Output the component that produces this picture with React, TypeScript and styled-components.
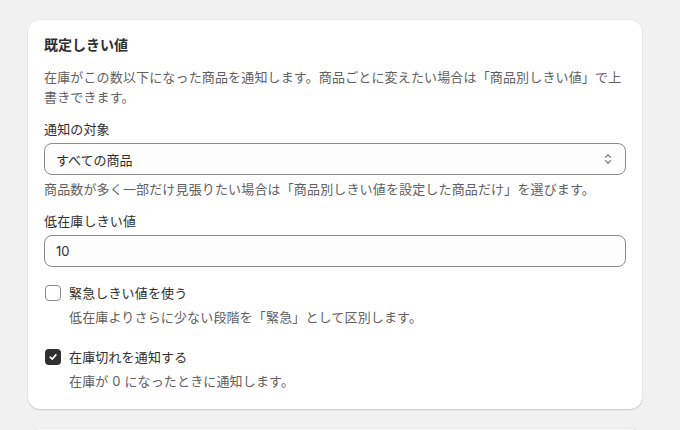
import React from 'react';
import styled, { createGlobalStyle } from 'styled-components';

const GlobalStyle = createGlobalStyle`
  html, body {
    margin: 0;
    padding: 0;
    background: #f1f1f1;
  }
  body {
    font-family: Inter, "Noto Sans CJK JP", sans-serif;
    color: #303030;
    -webkit-font-smoothing: antialiased;
  }
`;

const Page = styled.div`
  padding: 20px 38px 0 28px;
  display: flex;
  flex-direction: column;
  gap: 20px;
  height: 430px;
  box-sizing: border-box;
  overflow: hidden;
`;

const Card = styled.section`
  background: #fff;
  border-radius: 12px;
  box-shadow: 0 1px 0 0 rgba(26, 26, 26, 0.07), 0 0 0 1px rgba(0, 0, 0, 0.03), 0 1px 2px rgba(0, 0, 0, 0.08);
  padding: 15px 16px 18px;
  display: flex;
  flex-direction: column;
  flex-shrink: 0;
`;

const Title = styled.h2`
  margin: 0;
  font-size: 14px;
  line-height: 20px;
  font-weight: 650;
`;

const Text = styled.p<{ $tone?: 'subdued' }>`
  margin: 0;
  font-size: 13px;
  line-height: 20px;
  letter-spacing: 0.15px;
  color: ${(p) => (p.$tone === 'subdued' ? '#616161' : '#303030')};
`;

const Description = styled(Text)`
  margin-top: 12px;
`;

const Field = styled.div`
  margin-top: 12px;
  display: flex;
  flex-direction: column;
  gap: 4px;
`;

const Label = styled.label`
  font-size: 13px;
  line-height: 20px;
  letter-spacing: 0.15px;
  color: #303030;
`;

const InputBox = styled.div`
  position: relative;
  height: 32px;
  box-sizing: border-box;
  border: 1px solid #8a8a8a;
  border-radius: 8px;
  background: #fdfdfd;
  display: flex;
  align-items: center;
  padding: 0 11px;
  font-size: 13px;
  color: #303030;
`;

const Chevron = styled.svg`
  position: absolute;
  right: 13px;
  top: 50%;
  transform: translateY(-50%);
`;

const Options = styled.div`
  margin-top: 16px;
  display: flex;
  flex-direction: column;
  gap: 20px;
`;

const Option = styled.div`
  display: grid;
  grid-template-columns: 16px 1fr;
  column-gap: 9px;
  align-items: center;
`;

const Box = styled.span<{ $checked?: boolean }>`
  width: 16px;
  height: 16px;
  box-sizing: border-box;
  border-radius: 4px;
  border: ${(p) => (p.$checked ? 'none' : '1px solid #8a8a8a')};
  background: ${(p) => (p.$checked ? '#303030' : '#fff')};
  display: flex;
  align-items: center;
  justify-content: center;
  margin-left: 1px;
`;

const OptionLabel = styled.span`
  font-size: 13px;
  line-height: 20px;
  letter-spacing: 0.15px;
  color: #303030;
`;

const OptionHelp = styled(Text)`
  grid-column: 2;
  margin-top: 4px;
`;

const Checkbox: React.FC<{ checked?: boolean; label: string; help: string }> = ({ checked, label, help }) => (
  <Option>
    <Box $checked={checked}>
      {checked && (
        <svg width="10" height="10" viewBox="0 0 10 10">
          <path d="M2.2 5.2 L4.2 7.1 L7.9 2.9" fill="none" stroke="#fff" strokeWidth="1.6" strokeLinecap="round" strokeLinejoin="round" />
        </svg>
      )}
    </Box>
    <OptionLabel>{label}</OptionLabel>
    <OptionHelp $tone="subdued">{help}</OptionHelp>
  </Option>
);

const NextCard = styled.div`
  background: #fff;
  border-radius: 12px;
  height: 40px;
  flex-shrink: 0;
  box-shadow: 0 0 0 1px rgba(0, 0, 0, 0.05);
`;

const App: React.FC = () => {
  return (
    <>
      <GlobalStyle />
      <Page>
        <Card>
          <Title>既定しきい値</Title>
          <Description $tone="subdued">
            在庫がこの数以下になった商品を通知します。商品ごとに変えたい場合は「商品別しきい値」で上書きできます。
          </Description>
          <Field>
            <Label>通知の対象</Label>
            <InputBox>
              すべての商品
              <Chevron width="8" height="12" viewBox="0 0 8 12">
                <path d="M1.5 4.3 L4 1.8 L6.5 4.3 M1.5 7.7 L4 10.2 L6.5 7.7" fill="none" stroke="#6b6b6b" strokeWidth="1.1" strokeLinecap="round" strokeLinejoin="round" />
              </Chevron>
            </InputBox>
            <Text $tone="subdued">
              商品数が多く一部だけ見張りたい場合は「商品別しきい値を設定した商品だけ」を選びます。
            </Text>
          </Field>
          <Field>
            <Label>低在庫しきい値</Label>
            <InputBox>10</InputBox>
          </Field>
          <Options>
            <Checkbox label="緊急しきい値を使う" help="低在庫よりさらに少ない段階を「緊急」として区別します。" />
            <Checkbox checked label="在庫切れを通知する" help="在庫が 0 になったときに通知します。" />
          </Options>
        </Card>
        <NextCard />
      </Page>
    </>
  );
};

export default App;
